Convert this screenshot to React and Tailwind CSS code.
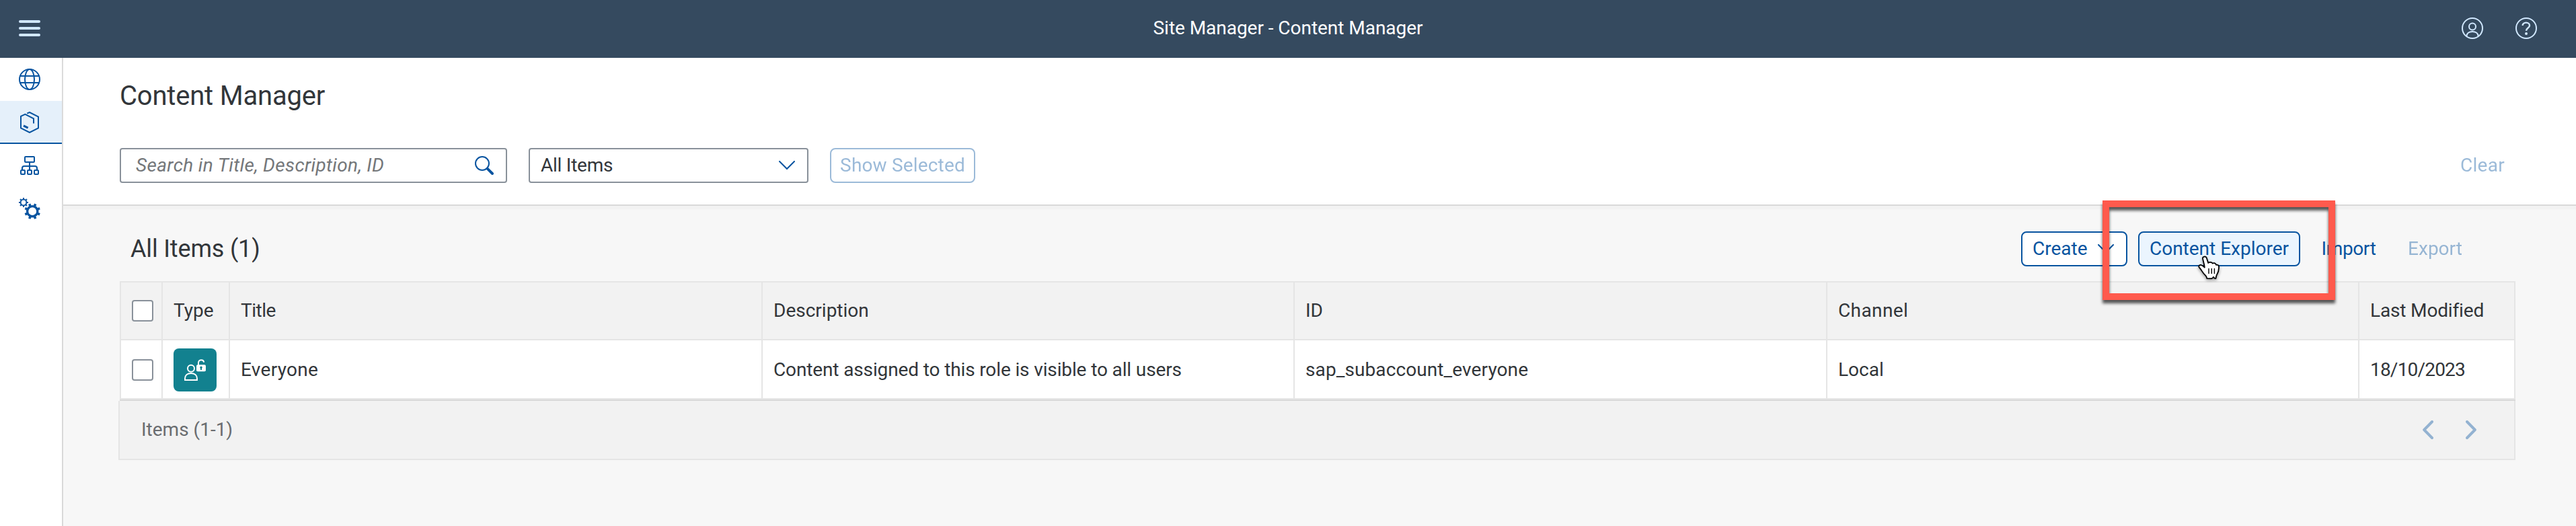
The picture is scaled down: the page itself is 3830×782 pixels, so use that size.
import React from "react";

const BIG_TEETH = [22.5, 67.5, 112.5, 157.5, 202.5, 247.5, 292.5, 337.5];
const SMALL_TEETH = [0, 45, 90, 135, 180, 225, 270, 315];

function Icon({ children, className = "" }) {
  return (
    <svg
      viewBox="0 0 32 32"
      className={`size-8 shrink-0 ${className}`}
      fill="none"
      stroke="currentColor"
      strokeWidth="2"
    >
      {children}
    </svg>
  );
}

function GlobeIcon() {
  return (
    <Icon>
      <circle cx="16" cy="16" r="15" />
      <ellipse cx="16" cy="16" rx="7" ry="15" />
      <path d="M2 11H30M2 21H30" />
    </Icon>
  );
}

function ContentIcon() {
  return (
    <Icon>
      <path d="M12.2 2.6L16 1L29 7.5V24.5L16 31L3 24.5V6.8L9.4 3.8L22 10.3V17.5" />
      <path d="M7 20.8L13.6 24.2" strokeWidth="3" />
    </Icon>
  );
}

function HierarchyIcon() {
  return (
    <Icon>
      <rect x="9" y="3" width="14" height="8" rx="1" />
      <path d="M16 11V23M5 23V20Q5 17 8 17H24Q27 17 27 20V23" />
      <rect x="3" y="23" width="6" height="6" rx="1" />
      <rect x="13" y="23" width="6" height="6" rx="1" />
      <rect x="23" y="23" width="6" height="6" rx="1" />
    </Icon>
  );
}

function GearsIcon() {
  return (
    <Icon>
      <circle cx="7" cy="7" r="4.4" />
      {SMALL_TEETH.map((a) => (
        <path key={a} d="M7 0V3" transform={`rotate(${a} 7 7)`} />
      ))}
      <circle cx="20.2" cy="20.2" r="7.6" strokeWidth="3.4" />
      {BIG_TEETH.map((a) => (
        <path key={a} d="M20.2 8.4V12" strokeWidth="3.6" transform={`rotate(${a} 20.2 20.2)`} />
      ))}
    </Icon>
  );
}

function UserIcon() {
  return (
    <Icon>
      <circle cx="16" cy="16" r="15" />
      <circle cx="16" cy="13.6" r="5" />
      <path d="M7.4 28C7.4 23.4 11 21 16 21S24.6 23.4 24.6 28" />
    </Icon>
  );
}

function HelpIcon() {
  return (
    <Icon>
      <circle cx="16" cy="16" r="15" />
      <path
        d="M10.6 12C10.6 9.4 12.8 7.6 15.8 7.6S21 9.4 21 12C21 15.6 16 15.6 16 19.8"
        strokeWidth="2.4"
      />
      <circle cx="16" cy="24" r="2" fill="currentColor" stroke="none" />
    </Icon>
  );
}

function RoleIcon() {
  return (
    <Icon>
      <circle cx="10" cy="13.8" r="5" />
      <path d="M1 31V29C1 24 4.6 21 10 21S19 24 19 29V31Z" />
      <path d="M21 9V5.4C21 2.8 22.8 1.2 25.4 1.2C27.8 1.2 29 2.6 29.2 4.6" />
      <rect x="18" y="8.3" width="14" height="10" rx="2" fill="currentColor" stroke="none" />
      <path
        d="M25 10.4a1.9 1.9 0 0 1 1 3.4V16h-2v-2.2a1.9 1.9 0 0 1 1-3.4Z"
        className="fill-[#12818f]"
        stroke="none"
      />
    </Icon>
  );
}

function SearchIcon() {
  return (
    <svg viewBox="0 0 28 28" className="size-7" fill="none" stroke="currentColor">
      <circle cx="11" cy="11" r="10" strokeWidth="2" />
      <path d="M18.6 18.6L26 26" strokeWidth="4" strokeLinecap="round" />
    </svg>
  );
}

function ChevronDown() {
  return (
    <svg
      viewBox="0 0 24 14"
      className="w-6 h-3.5"
      fill="none"
      stroke="currentColor"
      strokeWidth="2"
      strokeLinecap="round"
    >
      <path d="M1 1L12 12L23 1" />
    </svg>
  );
}

function PagerChevron({ flip }) {
  return (
    <svg
      viewBox="0 0 16 28"
      className={flip ? "w-4 h-7 -scale-x-100" : "w-4 h-7"}
      fill="none"
      stroke="currentColor"
      strokeWidth="4"
      strokeLinecap="round"
      strokeLinejoin="round"
    >
      <path d="M14 2L2.2 14L14 26" />
    </svg>
  );
}

function Checkbox() {
  return <span className="size-8 rounded-[4px] border-2 border-[#89919a] bg-white" />;
}

function NavItem({ children, active }) {
  return (
    <div
      className={
        active
          ? "h-16 pl-7 pt-4 bg-[#e5f0fa] border-b-2 border-[#0854a0]"
          : "h-16 pl-7 pt-4"
      }
    >
      {children}
    </div>
  );
}

function Cell({ children, className = "", last }) {
  return (
    <div
      className={`flex items-center pl-4 whitespace-nowrap ${
        last ? "" : "border-r-2 border-[#e5e5e5]"
      } ${className}`}
    >
      {children}
    </div>
  );
}

function Highlight() {
  return (
    <div className="absolute left-[3126px] top-[298px] w-[346px] h-[148px] border-[10px] border-[#ff5a4d] drop-shadow-[0_5px_2px_rgba(0,0,0,0.65)]" />
  );
}

function HandCursor() {
  return (
    <svg
      viewBox="0 0 36 40"
      className="absolute left-[3266px] top-[378px] w-9 h-10 drop-shadow-[0_2px_2px_rgba(0,0,0,0.4)]"
      strokeLinejoin="round"
      strokeLinecap="round"
    >
      <path
        d="M9 6.4C8.6 3.4 13.6 2.2 14.8 5.4L17.2 13C18.4 11.6 22.4 11.4 23.6 13.6C25 12.6 28 12.8 29 15.8C30.8 15.4 32.8 16 33 18.4C33.4 24 32 27.4 29.6 31.4C28.8 33 28.9 34.6 28.4 36C27 36.2 25.8 35.4 24.8 33.8C24 35.4 23.4 36 22 36.2L15.2 35.8C15 34.2 14.6 33 13.4 31.8C10.6 29 9 27 7.6 24.6C6.4 22.2 4.8 20.8 3.4 19C3 16.6 4.6 15.6 6.6 16C8.6 16.6 10.2 18 11.8 19.6C11.6 15 9.8 11 9 6.4Z"
        fill="#fff"
        stroke="#000"
        strokeWidth="1.8"
      />
      <path d="M18 21.4V28.6M22.2 21.4V28.6M26.4 21.4V28.6" fill="none" stroke="#000" strokeWidth="1.4" />
    </svg>
  );
}

const COLS = "grid grid-cols-[62px_100px_792px_791px_792px_791px_230px]";

export default function App() {
  return (
    <div className="relative w-[3830px] h-[782px] overflow-hidden flex flex-col bg-[#f7f7f7] font-['Roboto',sans-serif] text-[28px] leading-8 text-[#32363a]">
      <header className="h-[86px] shrink-0 pb-0.5 bg-[#354a5f] text-[#d1e8ff] grid grid-cols-3 items-center">
        <div className="pl-7">
          <div className="w-8 flex flex-col gap-1.5">
            <span className="h-1 rounded-full bg-[#d1e8ff]" />
            <span className="h-1 rounded-full bg-[#d1e8ff]" />
            <span className="h-1 rounded-full bg-[#d1e8ff]" />
          </div>
        </div>
        <div className="text-center text-white tracking-[-0.04px]">
          Site Manager - Content Manager
        </div>
        <div className="flex justify-end gap-12 pr-[58px]">
          <UserIcon />
          <HelpIcon />
        </div>
      </header>

      <div className="flex-1 flex">
        <nav className="w-[94px] shrink-0 bg-white border-r-2 border-[#d9d9d9] text-[#0854a0]">
          <NavItem>
            <GlobeIcon />
          </NavItem>
          <NavItem active>
            <ContentIcon />
          </NavItem>
          <NavItem>
            <HierarchyIcon />
          </NavItem>
          <NavItem>
            <GearsIcon />
          </NavItem>
        </nav>

        <main className="flex-1 flex flex-col">
          <section className="h-[220px] shrink-0 bg-white border-b-2 border-[#d9d9d9] shadow-[0_5px_1px_#f2f2f2] pl-[84px] pr-[90px]">
            <h1 className="pt-[33px] text-[40px] leading-[48px] tracking-[-0.2px]">
              Content Manager
            </h1>
            <div className="mt-[53px] h-[52px] flex">
              <div className="w-[576px] rounded-[4px] border-2 border-[#89919a] pl-[22px] pr-[18px] flex items-center justify-between">
                <span className="italic text-[#74777a] tracking-[0.35px]">
                  Search in Title, Description, ID
                </span>
                <span className="text-[#0854a0]">
                  <SearchIcon />
                </span>
              </div>
              <div className="ml-8 w-[416px] rounded-[4px] border-2 border-[#89919a] pl-4 pr-[18px] flex items-center justify-between">
                <span className="tracking-[-0.25px]">All Items</span>
                <span className="text-[#0854a0]">
                  <ChevronDown />
                </span>
              </div>
              <button className="ml-8 w-[216px] rounded-lg border-2 border-[#0854a0] text-[#0854a0] opacity-40 tracking-[0.17px]">
                Show Selected
              </button>
              <button className="ml-auto w-[98px] text-[#0854a0] opacity-40 tracking-[0.25px]">
                Clear
              </button>
            </div>
          </section>

          <section className="pl-[82px] pr-[90px]">
            <div className="h-28 pl-[18px] pr-16 pt-[38px] pb-[22px] flex justify-between">
              <h2 className="text-[36px] leading-[52px] tracking-[-0.17px]">All Items (1)</h2>
              <div className="flex gap-4 text-[#0854a0]">
                <button className="w-[158px] rounded-lg border-2 border-[#0854a0] bg-white pl-[15px] pr-[18px] flex items-center justify-between">
                  Create
                  <ChevronDown />
                </button>
                <button className="w-[241px] rounded-lg border-2 border-[#0854a0] bg-[#ebf5fe]">
                  Content Explorer
                </button>
                <button className="w-28 tracking-[-0.4px]">Import</button>
                <button className="w-28 pl-px opacity-40">Export</button>
              </div>
            </div>

            <div className="ml-0.5 border-2 border-b-0 border-[#e5e5e5]">
              <div className={`${COLS} h-[86px] bg-[#f2f2f2] border-b-2 border-[#e5e5e5]`}>
                <Cell>
                  <Checkbox />
                </Cell>
                <Cell>Type</Cell>
                <Cell className="tracking-[-0.5px]">Title</Cell>
                <Cell>Description</Cell>
                <Cell>ID</Cell>
                <Cell className="tracking-[0.4px]">Channel</Cell>
                <Cell last className="tracking-[-0.15px]">
                  Last Modified
                </Cell>
              </div>
              <div className={`${COLS} h-[86px] bg-white`}>
                <Cell className="pt-0.5">
                  <Checkbox />
                </Cell>
                <Cell className="pt-0.5">
                  <span className="size-16 rounded-lg bg-[#12818f] text-white flex items-center justify-center">
                    <RoleIcon />
                  </span>
                </Cell>
                <Cell className="pt-0.5 tracking-[0.3px]">Everyone</Cell>
                <Cell className="pt-0.5 tracking-[-0.13px]">
                  Content assigned to this role is visible to all users
                </Cell>
                <Cell className="pt-0.5 tracking-[0.1px]">sap_subaccount_everyone</Cell>
                <Cell className="pt-0.5">Local</Cell>
                <Cell last className="pt-0.5 tracking-[-0.8px]">
                  18/10/2023
                </Cell>
              </div>
            </div>
            <div className="ml-0.5 h-1 border-t-2 border-[#e5e5e5] bg-[#d9d9d9]" />
            <div className="h-[88px] border-x-2 border-b-2 border-[#e5e5e5] bg-[#f2f2f2] pl-8 pr-14 flex items-center justify-between">
              <span className="text-[#6a6d70]">Items (1-1)</span>
              <div className="flex gap-12 text-[#0854a0] opacity-40">
                <PagerChevron />
                <PagerChevron flip />
              </div>
            </div>
          </section>
        </main>
      </div>

      <Highlight />
      <HandCursor />
    </div>
  );
}
